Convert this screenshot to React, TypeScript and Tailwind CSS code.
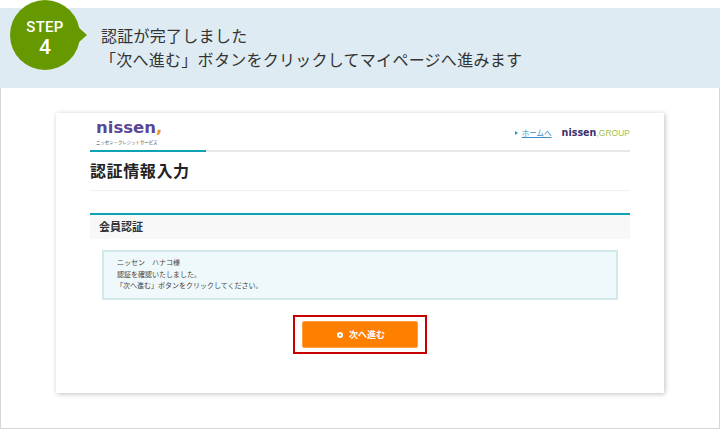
const jp = "font-['Noto_Sans_CJK_JP','Noto_Sans',sans-serif]";

export default function App() {
  return (
    <div className={`w-[720px] h-[429px] bg-white overflow-hidden pt-2 ${jp}`}>
      {/* Step banner */}
      <header className="relative h-20 bg-[#deebf2] pl-[101px] pt-[15px] text-[16px] leading-[24px] text-[#333] tracking-[0.27px]">
        <div className="absolute left-[10px] -top-2 size-[70px] rounded-full bg-[#669900] flex flex-col items-center pt-[19px] text-white font-['Roboto',sans-serif] tracking-normal">
          <span className="text-[15px] leading-[16px] font-medium tracking-[0.3px]">STEP</span>
          <span className="text-[21px] leading-[24px] font-medium">4</span>
        </div>
        <div className="absolute left-[78px] top-[19px] w-0 h-0 border-y-[8px] border-y-transparent border-l-[9px] border-l-[#669900]" />
        <p>認証が完了しました</p>
        <p className="-ml-px">「次へ進む」ボタンをクリックしてマイページへ進みます</p>
      </header>

      {/* Frame */}
      <div className="h-[341px] border-x border-b border-[#d8d8d8] pt-[25px] px-[55px]">
        <main className="h-[280px] bg-white shadow-[1px_1px_5px_rgba(0,0,0,0.25)] px-[34px]">
          {/* Card header */}
          <div className="relative h-[39px] border-b-2 border-[#e8e8e8] flex items-center justify-end">
            <div className="absolute left-0 -bottom-[2px] w-[116px] h-[2px] bg-[#0ea2b5]" />
            <div className="absolute left-[6px] top-[5px] flex flex-col">
              <span className="font-['DejaVu_Sans',sans-serif] text-[16.5px] leading-[20px] font-bold text-[#5b4694]">nissen<span className="text-[#e8941e]">,</span></span>
              <span className="text-[4.4px] leading-[6px] mt-[1px] text-[#444] whitespace-nowrap">ニッセン・クレジットサービス</span>
            </div>
            <div className="flex items-center pt-[3px]">
              <span className="w-0 h-0 border-y-[2px] border-y-transparent border-l-[3px] border-l-[#0ea2b5] mr-[4px]" />
              <a className="text-[7.5px] leading-[10px] text-[#3d8ec9] underline mr-[10px]">ホームへ</a>
              <span className="font-['DejaVu_Sans',sans-serif] text-[9.6px] leading-[12px] font-bold text-[#3a2f6b]">nissen</span>
              <span className="font-['Liberation_Sans',sans-serif] text-[8.5px] leading-[12px] text-[#a5c045]">,GROUP</span>
            </div>
          </div>

          {/* Title */}
          <h1 className="h-[39px] border-b border-[#f0f0f0] pt-[6px] text-[16px] leading-[24px] font-bold text-[#222] tracking-[0.6px]">認証情報入力</h1>

          {/* Section */}
          <section className="mt-[22px] border-t-2 border-[#0ea2b5] bg-[#f8f8f8] h-[26px] pl-[9px] text-[11px] leading-[23px] font-bold text-[#333]">会員認証</section>

          <div className="mt-[11px] mx-3 h-[50px] border-2 border-[#d3e8ea] bg-[#eff8fa] pt-[5px] pl-[13px] text-[7px] leading-[11.5px] text-[#444]">
            <p>ニッセン　ハナコ様</p>
            <p>認証を確認いたしました。</p>
            <p className="-ml-[1px]">「次へ進む」ボタンをクリックしてください。</p>
          </div>

          {/* Next button */}
          <div className="mt-[15px] flex justify-center">
            <div className="w-[134px] h-[39px] border-2 border-[#c80000] flex items-center justify-center">
              <button className="w-[116px] h-[27px] rounded-[2px] bg-[#ff8000] border border-[#ffa040] flex items-center justify-center gap-[6px] pl-[2px] text-[9px] font-bold text-white">
                <span className="size-[6px] rounded-full bg-white flex items-center justify-center">
                  <span className="size-[2px] rounded-full bg-[#ff8000]" />
                </span>
                次へ進む
              </button>
            </div>
          </div>
        </main>
      </div>
    </div>
  );
}
